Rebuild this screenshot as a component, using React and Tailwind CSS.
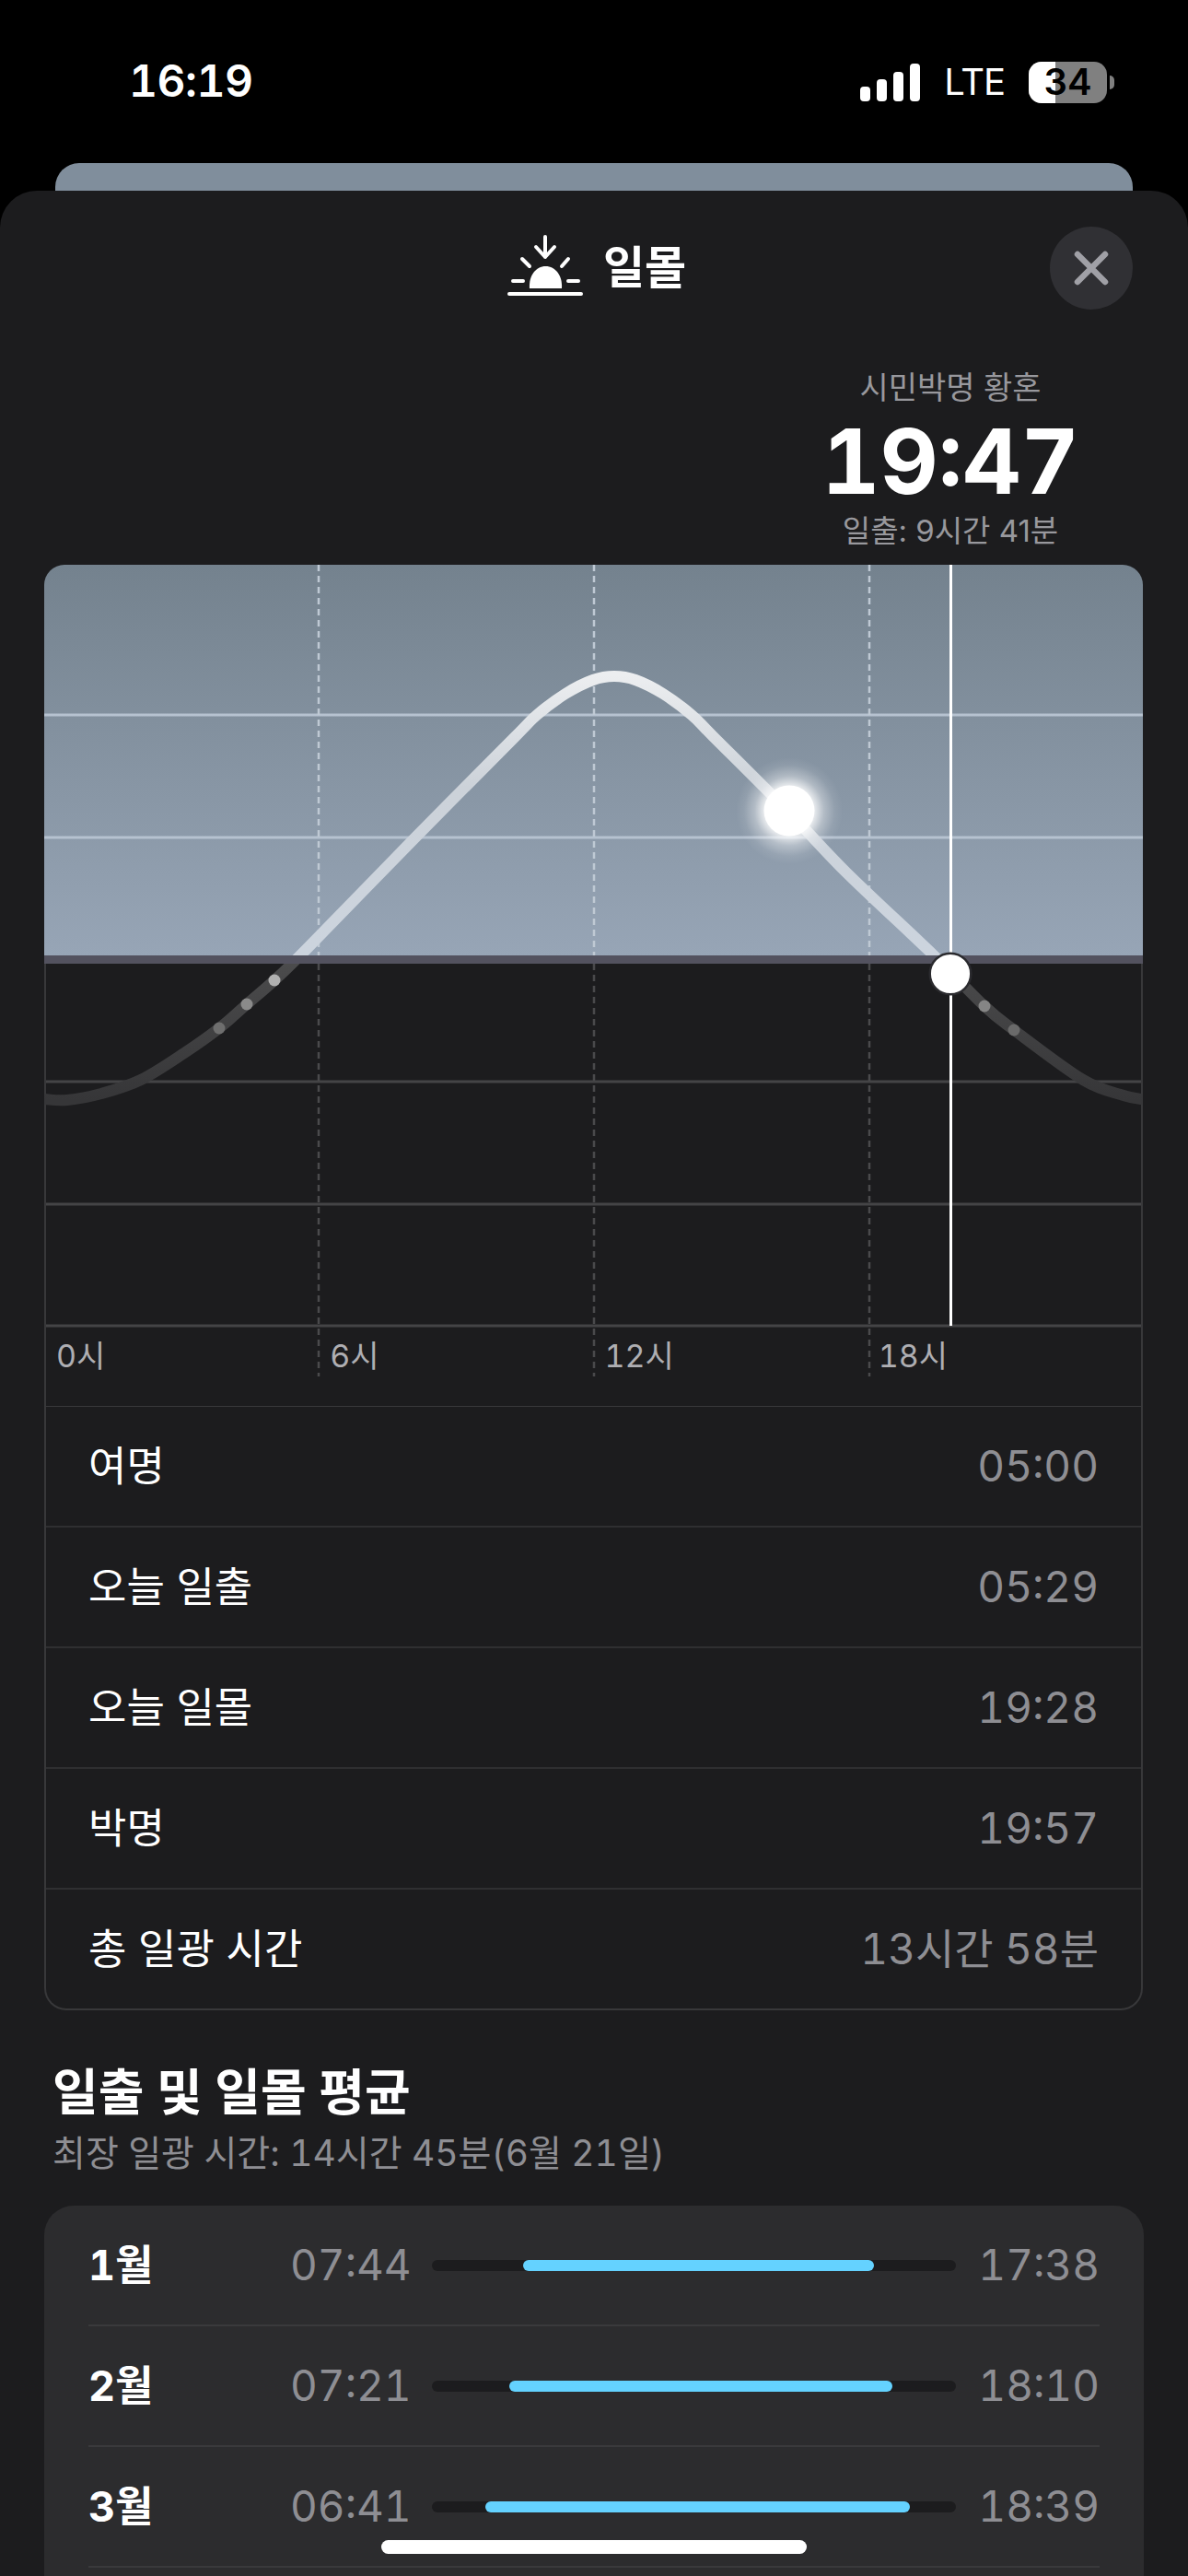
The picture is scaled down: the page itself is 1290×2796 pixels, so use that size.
import React from "react";

const FONT = "font-['Inter','Noto_Sans_CJK_KR',sans-serif]";

// centre line of the sun path, read off the picture (page coordinates)
const SUN_PATH = [
  [20, 1190], [48, 1193], [73, 1194], [110, 1187], [153, 1172], [200, 1143], [238, 1116], [268, 1090], [298, 1064], [333, 1030],
  [451, 909], [559, 800], [583, 776], [614, 753], [644, 738], [667, 734], [690, 738], [720, 753], [751, 776], [775, 800], [857, 882],
  [920, 948], [1013, 1036], [1069, 1092], [1101, 1118], [1176, 1172], [1220, 1189], [1241, 1193], [1270, 1194],
];

const smoothPath = (pts) => {
  let d = `M${pts[0][0]} ${pts[0][1]}`;
  for (let i = 0; i < pts.length - 1; i++) {
    const p0 = pts[i - 1] || pts[i];
    const p1 = pts[i];
    const p2 = pts[i + 1];
    const p3 = pts[i + 2] || p2;
    const c1x = p1[0] + (p2[0] - p0[0]) / 6;
    const c1y = p1[1] + (p2[1] - p0[1]) / 6;
    const c2x = p2[0] - (p3[0] - p1[0]) / 6;
    const c2y = p2[1] - (p3[1] - p1[1]) / 6;
    d += ` C${c1x} ${c1y} ${c2x} ${c2y} ${p2[0]} ${p2[1]}`;
  }
  return d;
};

const rows = [
  ["여명", "05:00"],
  ["오늘 일출", "05:29"],
  ["오늘 일몰", "19:28"],
  ["박명", "19:57"],
  ["총 일광 시간", "13시간 58분"],
];

const months = [
  { name: "1월", rise: "07:44", set: "17:38", left: 99, width: 381 },
  { name: "2월", rise: "07:21", set: "18:10", left: 84, width: 416 },
  { name: "3월", rise: "06:41", set: "18:39", left: 58, width: 461 },
];

function SunsetIcon() {
  return (
    <svg width="82" height="66" viewBox="553 255 82 66" fill="none" stroke="white" strokeWidth="4" strokeLinecap="round" strokeLinejoin="round">
      <path d="M594 257V279M584 268L594 279L604 268" />
      <path d="M569 281L577 289M619 281L612 289M559 305H570M619 305H630" />
      <path d="M577 313C576 299 584 289 594.500 289C605 289 613 299 612 313Z" fill="white" stroke="none" />
      <path d="M555 319H633" />
    </svg>
  );
}

function SunChart() {
  const d = smoothPath(SUN_PATH);
  return (
    <svg width="1193" height="913" viewBox="48 613 1193 913" className="block">
      <defs>
        <linearGradient id="sky" x1="0" y1="0" x2="0" y2="1">
          <stop offset="0" stopColor="#74828e" />
          <stop offset="1" stopColor="#97a5b6" />
        </linearGradient>
        <linearGradient id="dayLine" gradientUnits="userSpaceOnUse" x1="0" y1="733" x2="0" y2="1036">
          <stop offset="0" stopColor="#eceef0" />
          <stop offset="0.4" stopColor="#ccd2d9" />
          <stop offset="1" stopColor="#ccd4de" />
        </linearGradient>
        <linearGradient id="nightLine" gradientUnits="userSpaceOnUse" x1="0" y1="1046" x2="0" y2="1194">
          <stop offset="0" stopColor="#4b4b4c" />
          <stop offset="1" stopColor="#363638" />
        </linearGradient>
        <radialGradient id="glow">
          <stop offset="0.45" stopColor="white" stopOpacity="0.85" />
          <stop offset="0.65" stopColor="white" stopOpacity="0.35" />
          <stop offset="0.85" stopColor="white" stopOpacity="0.08" />
          <stop offset="1" stopColor="white" stopOpacity="0" />
        </radialGradient>
        <clipPath id="dayClip"><rect x="48" y="613" width="1193" height="424" /></clipPath>
        <clipPath id="nightClip"><rect x="48" y="1037" width="1193" height="402" /></clipPath>
      </defs>

      <rect x="48" y="613" width="1193" height="424" fill="url(#sky)" />
      <rect x="48" y="1037" width="1193" height="489" fill="#1c1c1e" />

      <path d="M48 776H1241M48 909H1241" stroke="#b6c2d0" strokeWidth="3" />
      <path d="M48 1174H1241M48 1307H1241M48 1439H1241" stroke="#444446" strokeWidth="3" />
      <path d="M49 1046V1526M1240 1046V1526" stroke="#38383a" strokeWidth="2" />

      <path d="M346 613V1037M645 613V1037M944 613V1037" stroke="#bfc9d4" strokeWidth="2.500" strokeDasharray="7 5" />
      <path d="M346 1046V1494M645 1046V1494M944 1046V1494" stroke="#4a4a4c" strokeWidth="2.500" strokeDasharray="7 5" />

      <path d={d} fill="none" stroke="url(#dayLine)" strokeWidth="12" clipPath="url(#dayClip)" />
      <path d={d} fill="none" stroke="url(#nightLine)" strokeWidth="12" clipPath="url(#nightClip)" />

      <rect x="48" y="1037" width="1193" height="9" fill="#53525f" />

      <circle cx="238" cy="1116" r="6.500" fill="#6e6e6e" />
      <circle cx="268" cy="1090" r="6.500" fill="#8a8a8a" />
      <circle cx="298" cy="1064" r="6.500" fill="#b0b0b0" />
      <circle cx="1069" cy="1092" r="6.500" fill="#858585" />
      <circle cx="1101" cy="1118" r="6.500" fill="#6a6a6a" />

      <path d="M1032.500 613V1439" stroke="white" strokeWidth="3" />

      <circle cx="857" cy="880" r="58" fill="url(#glow)" />
      <circle cx="857" cy="880" r="27.500" fill="white" />
      <circle cx="1032" cy="1057" r="22.300" fill="white" stroke="#2a2a2e" strokeWidth="2.500" />
    </svg>
  );
}

export default function App() {
  return (
    <div className={`${FONT} relative w-[1290px] h-[2796px] overflow-hidden bg-black text-white`}>
      {/* status bar */}
      <div className="h-[177px] flex items-start justify-between pl-[140px] pr-[80px] pt-[58px]">
        <span className="text-[48px] leading-[60px] font-semibold tracking-[-0.5px] tabular-nums">16:19</span>
        <div className="flex items-center gap-[26px] h-[54px] mt-[4px]">
          <div className="flex items-end gap-[7px] h-[41px]">
            <div className="w-[11px] h-[16px] rounded-[4px] bg-white" />
            <div className="w-[11px] h-[24px] rounded-[4px] bg-white" />
            <div className="w-[11px] h-[32px] rounded-[4px] bg-white" />
            <div className="w-[11px] h-[41px] rounded-[4px] bg-white" />
          </div>
          <span className="text-[40px] leading-[54px] font-normal tracking-[-1px]">LTE</span>
          <div className="flex items-center gap-[3px]">
            <div className="relative w-[85px] h-[45px] rounded-[14px] overflow-hidden bg-[#808080] flex items-center justify-center">
              <div className="absolute inset-y-0 left-0 w-[29px] bg-white" />
              <span className="relative text-[40px] leading-[44px] font-semibold text-black">34</span>
            </div>
            <div className="w-[5px] h-[15px] rounded-r-full bg-[#808080]" />
          </div>
        </div>
      </div>

      {/* card behind the sheet */}
      <div className="mx-[60px] h-[30px] rounded-t-[26px] bg-[#808e9c]" />

      {/* sheet */}
      <div className="relative h-[2589px] rounded-t-[40px] bg-[#1c1c1e] overflow-hidden">
        <div className="relative h-[193px] pt-[44px] flex justify-center pl-[6px]">
          <div className="flex items-start gap-[22px]">
            <div className="pt-[4px]"><SunsetIcon /></div>
            <span className="text-[49px] leading-[70px] font-semibold mt-[5px]">일몰</span>
          </div>
          <button className="absolute right-[60px] top-[39px] w-[90px] h-[90px] rounded-full bg-[#303034] flex items-center justify-center">
            <svg width="38" height="38" viewBox="0 0 38 38" fill="none" stroke="#a0a0a6" strokeWidth="6.500" strokeLinecap="round">
              <path d="M4 4L34 34M34 4L4 34" />
            </svg>
          </button>
        </div>

        <div className="flex justify-end pr-[58px]">
          <div className="w-[400px] h-[213px] flex flex-col items-center">
            <span className="text-[34px] leading-[42px] text-[#98989d]">시민박명 황혼</span>
            <span className="text-[98px] leading-[108px] font-bold tabular-nums mt-[5px]">19:47</span>
            <span className="text-[33px] leading-[44px] text-[#98989d] mt-[-1px]">일출: 9시간 41분</span>
          </div>
        </div>

        {/* chart + table */}
        <div className="mx-[48px] w-[1193px]">
          <div className="relative rounded-t-[22px] overflow-hidden">
            <SunChart />
            <div className="absolute left-0 right-0 top-[837px] grid grid-cols-4 text-[34px] leading-[44px] text-[#aeaeb2] tabular-nums">
              <span className="pl-[13px]">0시</span>
              <span className="pl-[12px]">6시</span>
              <span className="pl-[12px]">12시</span>
              <span className="pl-[11px]">18시</span>
            </div>
          </div>
          <div className="border-x-2 border-b-2 border-[#38383a] rounded-b-[24px] -mt-px">
            {rows.map(([label, value]) => (
              <div key={label} className="h-[131px] flex items-center justify-between px-[46px] border-t-2 border-[#2f2f31] first:border-[#38383a]">
                <span className="text-[45px]">{label}</span>
                <span className="text-[46px] text-[#8e8e93] tabular-nums">{value}</span>
              </div>
            ))}
          </div>
        </div>

        <div className="pl-[57px] pt-[58px]">
          <div className="text-[54px] leading-[64px] font-semibold">일출 및 일몰 평균</div>
          <div className="text-[39px] leading-[50px] text-[#8e8e93] mt-[8px] tabular-nums">최장 일광 시간: 14시간 45분(6월 21일)</div>
        </div>

        <div className="mx-[48px] mt-[32px] rounded-t-[32px] bg-[#2c2c2e] px-[48px] pb-[40px]">
          {months.map((m) => (
            <div key={m.name} className="h-[131px] flex items-center border-b-2 border-[#3a3a3c]">
              <span className="w-[220px] text-[45px] font-bold tabular-nums">{m.name}</span>
              <span className="w-[153px] text-[46px] text-[#8e8e93] tabular-nums -ml-[1px]">{m.rise}</span>
              <div className="relative w-[569px] h-[12px] rounded-full bg-[#1c1c1e] ml-[1px]">
                <div className="absolute inset-y-0 rounded-full bg-[#64d2ff]" style={{ left: m.left, width: m.width }} />
              </div>
              <span className="flex-1 text-right text-[46px] text-[#8e8e93] tabular-nums">{m.set}</span>
            </div>
          ))}
        </div>
      </div>

      {/* home indicator */}
      <div className="absolute left-[414px] top-[2757px] w-[462px] h-[15px] rounded-full bg-white" />
    </div>
  );
}
